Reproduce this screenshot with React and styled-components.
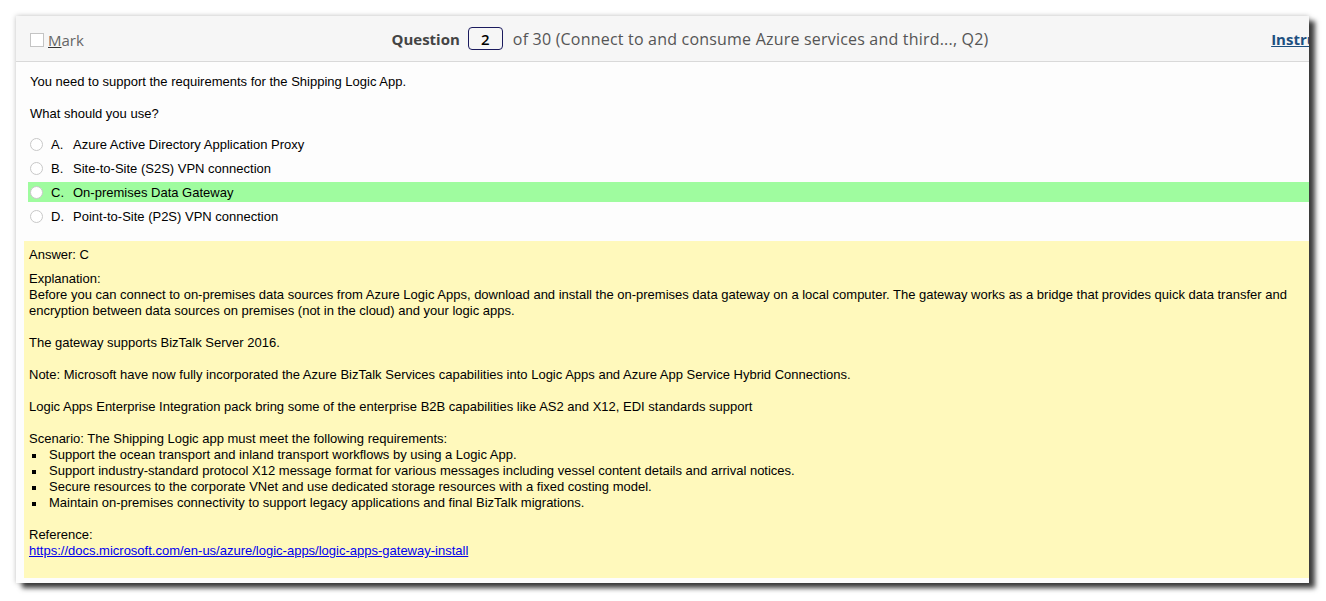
import React from 'react'
import styled, { createGlobalStyle } from 'styled-components'

const GlobalStyle = createGlobalStyle`
  body {
    margin: 0;
    background: #ffffff;
  }
`

const options = [
  { key: 'A', text: 'Azure Active Directory Application Proxy' },
  { key: 'B', text: 'Site-to-Site (S2S) VPN connection' },
  { key: 'C', text: 'On-premises Data Gateway', correct: true },
  { key: 'D', text: 'Point-to-Site (P2S) VPN connection' },
]

const requirements = [
  'Support the ocean transport and inland transport workflows by using a Logic App.',
  'Support industry-standard protocol X12 message format for various messages including vessel content details and arrival notices.',
  'Secure resources to the corporate VNet and use dedicated storage resources with a fixed costing model.',
  'Maintain on-premises connectivity to support legacy applications and final BizTalk migrations.',
]

const App = () => {
  return <Page>
    <GlobalStyle />
    <Window>
      <Header>
        <MarkBox>
          <Check />
          <MarkLabel><u>M</u>ark</MarkLabel>
        </MarkBox>
        <QuestionNav>
          <strong>Question</strong>
          <NumberBox>2</NumberBox>
          <span>of 30 (Connect to and consume Azure services and third..., Q2)</span>
        </QuestionNav>
        <Instructions>Instructions</Instructions>
      </Header>

      <Body>
        <Para>You need to support the requirements for the Shipping Logic App.</Para>
        <Para>What should you use?</Para>

        <Options>
          {options.map(o => (
            <Option key={o.key} $correct={o.correct}>
              <Radio />
              <Letter>{o.key}.</Letter>
              <span>{o.text}</span>
            </Option>
          ))}
        </Options>

        <AnswerBox>
          <AnswerLine>Answer: C</AnswerLine>
          <Block>
            Explanation:<br />
            Before you can connect to on-premises data sources from Azure Logic Apps, download and install the on-premises data gateway on a local computer. The gateway works as a bridge that provides quick data transfer and encryption between data sources on premises (not in the cloud) and your logic apps.
          </Block>
          <Block>The gateway supports BizTalk Server 2016.</Block>
          <Block>Note: Microsoft have now fully incorporated the Azure BizTalk Services capabilities into Logic Apps and Azure App Service Hybrid Connections.</Block>
          <Block>Logic Apps Enterprise Integration pack bring some of the enterprise B2B capabilities like AS2 and X12, EDI standards support</Block>
          <Block>
            Scenario: The Shipping Logic app must meet the following requirements:
            <Bullets>
              {requirements.map(r => <li key={r}>{r}</li>)}
            </Bullets>
          </Block>
          <Block>
            Reference:<br />
            <Link href="#">https://docs.microsoft.com/en-us/azure/logic-apps/logic-apps-gateway-install</Link>
          </Block>
        </AnswerBox>
      </Body>
    </Window>
  </Page>
}

const Page = styled.div`
  padding: 16px 0 0 16px;
  height: 601px;
  box-sizing: border-box;
  overflow: hidden;
`

const Window = styled.div`
  width: 1293px;
  height: 567px;
  background: #fdfdfd;
  overflow: hidden;
  box-shadow: 6px 5px 5px rgba(0, 0, 0, 0.75), 0 0 5px rgba(0, 0, 0, 0.25);
`

const Header = styled.div`
  width: 1348px;
  height: 46px;
  box-sizing: border-box;
  padding: 0 2px 0 14px;
  display: grid;
  grid-template-columns: 1fr auto 1fr;
  align-items: center;
  background: #f6f6f6;
  border-bottom: 1px solid #d9d9d9;
  font-family: "Open Sans", "Noto Sans", sans-serif;
  font-size: 16px;
  color: #555;
`

const MarkBox = styled.div`
  display: flex;
  align-items: center;
  gap: 4px;
  padding-top: 2px;
  font-size: 15px;
`

const Check = styled.span`
  width: 12px;
  height: 12px;
  border: 1px solid #c4c4c4;
  background: #fff;
`

const MarkLabel = styled.span`
  color: #666;
  u {
    text-decoration-color: #333;
  }
`

const QuestionNav = styled.div`
  display: flex;
  align-items: center;
  gap: 8px;
  margin-right: 12px;
  span {
    letter-spacing: 0.2px;
  }
  strong {
    color: #444;
    font-weight: 700;
    font-size: 15px;
  }
`

const NumberBox = styled.em`
  width: 35px;
  height: 23px;
  box-sizing: border-box;
  border: 1px solid #1b1b5e;
  border-radius: 4px;
  display: flex;
  align-items: center;
  justify-content: center;
  color: #000;
  font-style: normal;
  font-weight: 600;
  font-size: 15px;
  margin-right: 2px;
`

const Instructions = styled.a`
  justify-self: end;
  color: #1d4f80;
  font-weight: 700;
  font-size: 15px;
  text-decoration: underline;
`

const Body = styled.div`
  padding: 12px 0 0 8px;
  font-family: "Liberation Sans", Arial, sans-serif;
  font-size: 13px;
  color: #000;
`

const Para = styled.p`
  margin: 0 0 17px 6px;
  line-height: 15px;
`

const Options = styled.div`
  display: flex;
  flex-direction: column;
  gap: 4px;
  margin: -4px 0 0 4px;
`

const Option = styled.div`
  height: 20px;
  display: flex;
  align-items: center;
  padding-left: 2px;
  background: ${p => (p.$correct ? '#9ffc9f' : 'transparent')};
`

const Radio = styled.span`
  width: 11px;
  height: 11px;
  border-radius: 50%;
  border: 1px solid #c8c8c8;
  background: #fff;
  margin-right: 8px;
`

const Letter = styled.span`
  width: 22px;
`

const AnswerBox = styled.div`
  margin-top: 15px;
  background: #fff9bc;
  padding: 6px 0 20px 5px;
  line-height: 16px;
  height: 337px;
  box-sizing: border-box;
`

const AnswerLine = styled.div`
  margin-bottom: 8px;
`

const Block = styled.div`
  margin-bottom: 16px;
  padding-right: 10px;
`

const Bullets = styled.ul`
  margin: 0;
  padding: 0;
  list-style: none;
  li {
    position: relative;
    padding-left: 20px;
  }
  li::before {
    content: '';
    position: absolute;
    left: 3px;
    top: 7px;
    width: 4px;
    height: 4px;
    background: #000;
  }
`

const Link = styled.a`
  color: #0000ee;
  text-decoration: underline;
`

export default App
